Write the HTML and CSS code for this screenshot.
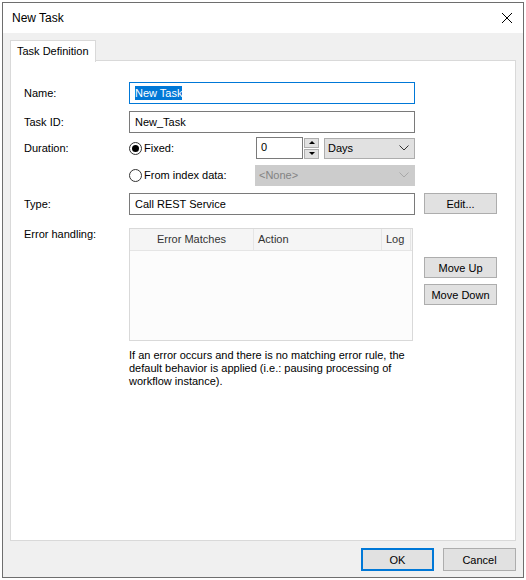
FILE: index.html
```html
<!DOCTYPE html>
<html lang="en">
<head>
  <meta charset="UTF-8" />
  <title>New Task</title>
  <link rel="stylesheet" href="styles.css">
</head>
<body>

<div class="dialog">
  <div class="titlebar">
    <span class="title">New Task</span>
    <svg class="close" width="12" height="12" viewBox="0 0 12 12">
      <path d="M1 1 L11 11 M11 1 L1 11" stroke="#000" stroke-width="1"/>
    </svg>
  </div>

  <div class="content">
    <div class="tabs">
      <div class="tab">Task Definition</div>
    </div>

    <div class="panel">
      <!-- Name -->
      <div class="row row-name">
        <div class="label">Name:</div>
        <div class="field input focused"><span class="sel">New Task</span></div>
      </div>

      <div class="row row-gap7">
        <div class="label">Task ID:</div>
        <div class="field input">New_Task</div>
      </div>

      <!-- Duration -->
      <div class="row row-gap4">
        <div class="label">Duration:</div>
        <div class="field dur">
          <div class="radio-wrap">
            <span class="radio checked"></span>
            <span>Fixed:</span>
          </div>
          <div class="spin-input">0</div>
          <div class="spin-btns">
            <div class="spin-btn"><span class="tri-up"></span></div>
            <div class="spin-btn"><span class="tri-down"></span></div>
          </div>
          <div class="combo">
            <span>Days</span>
            <svg width="10" height="6" viewBox="0 0 10 6"><path d="M0.5 0.5 L5 5 L9.5 0.5" fill="none" stroke="#333"/></svg>
          </div>
        </div>
      </div>

      <div class="row row-gap5">
        <div class="label"></div>
        <div class="field dur">
          <div class="radio-wrap wide">
            <span class="radio"></span>
            <span>From index data:</span>
          </div>
          <div class="combo disabled">
            <span>&lt;None&gt;</span>
            <svg width="10" height="6" viewBox="0 0 10 6"><path d="M0.5 0.5 L5 5 L9.5 0.5" fill="none" stroke="#a8a8a8"/></svg>
          </div>
        </div>
      </div>

      <!-- Type -->
      <div class="row row-gap7">
        <div class="label">Type:</div>
        <div class="field input">Call REST Service</div>
        <button class="btn btn-edit">Edit...</button>
      </div>

      <!-- Error handling -->
      <div class="row row-errors">
        <div class="label">Error handling:</div>
        <div class="err-col">
          <div class="table">
            <div class="thead">
              <div class="th th-match">Error Matches</div>
              <div class="th th-action">Action</div>
              <div class="th th-log">Log</div>
            </div>
          </div>
          <p class="note">If an error occurs and there is no matching error rule, the default behavior is applied (i.e.: pausing processing of workflow instance).</p>
        </div>
        <div class="side-btns">
          <button class="btn">Move Up</button>
          <button class="btn">Move Down</button>
        </div>
      </div>
    </div>

    <div class="footer">
      <button class="btn btn-foot btn-default">OK</button>
      <button class="btn btn-foot">Cancel</button>
    </div>
  </div>
</div>

</body>
</html>
```

FILE: styles.css
```css
body {
  margin: 0;
  background: #fff;
  font-family: 'Liberation Sans', Arial, sans-serif;
  font-size: 11px;
  color: #000;
}
.dialog {
  margin: 2px 2px 0 2px;
  width: 520px;
  height: 574px;
  border: 1px solid #6e6e6e;
  display: flex;
  flex-direction: column;
  background: #f0f0f0;
}
.titlebar {
  height: 30px;
  background: #fff;
  display: flex;
  align-items: center;
  justify-content: space-between;
  padding: 0 9px 0 9px;
}
.title {
  font-size: 12px;
}
.close {
  margin-right: 1px;
}
.content {
  flex: 1;
  display: flex;
  flex-direction: column;
  padding: 7px 7px 0 7px;
}
.tabs {
  display: flex;
  height: 20px;
}
.tab {
  background: #fff;
  border: 1px solid #d9d9d9;
  border-bottom: none;
  padding: 0 6px;
  white-space: nowrap;
  line-height: 21px;
  position: relative;
  z-index: 1;
  height: 21px;
}
.panel {
  height: 479px;
  background: #fff;
  border: 1px solid #d9d9d9;
  padding: 0 0 0 13px;
}
.row {
  display: flex;
  align-items: flex-start;
}
.row-name { margin-top: 21px; }
.row-gap7 { margin-top: 7px; }
.row-gap4 { margin-top: 4px; }
.row-gap5 { margin-top: 5px; }
.row-errors { margin-top: 13px; }
.label {
  width: 105px;
  flex-shrink: 0;
  line-height: 22px;
}
.row-errors .label {
  line-height: 13px;
}
.field {
  width: 286px;
  height: 22px;
  box-sizing: border-box;
}
.input {
  border: 1px solid #7a7a7a;
  padding: 0 5px;
  line-height: 20px;
}
.input.focused {
  border-color: #0078d7;
}
.sel {
  background: #0078d7;
  color: #fff;
  padding: 1px 0;
}
.dur {
  display: flex;
  align-items: center;
}
.radio-wrap {
  display: flex;
  align-items: center;
  gap: 2px;
  width: 127px;
}
.radio-wrap.wide {
  width: 126px;
}
.radio {
  width: 11px;
  height: 11px;
  border: 1px solid #333;
  border-radius: 50%;
  display: flex;
  align-items: center;
  justify-content: center;
  background: #fff;
}
.radio.checked::after {
  content: "";
  width: 7px;
  height: 7px;
  border-radius: 50%;
  background: #000;
}
.spin-input {
  width: 47px;
  height: 22px;
  box-sizing: border-box;
  border: 1px solid #7a7a7a;
  padding: 0 4px;
  line-height: 18px;
}
.spin-btns {
  display: flex;
  flex-direction: column;
  gap: 1px;
  margin-left: 1px;
  margin-right: 5px;
}
.spin-btn {
  width: 15px;
  height: 10px;
  box-sizing: border-box;
  border: 1px solid #adadad;
  background: #e1e1e1;
  display: flex;
  align-items: center;
  justify-content: center;
}
.tri-up, .tri-down {
  width: 0;
  height: 0;
  border-left: 3px solid transparent;
  border-right: 3px solid transparent;
}
.tri-up { border-bottom: 3px solid #000; }
.tri-down { border-top: 3px solid #000; }
.combo {
  flex: 1;
  height: 21px;
  box-sizing: border-box;
  border: 1px solid #adadad;
  background: #e1e1e1;
  display: flex;
  align-items: center;
  justify-content: space-between;
  padding: 0 5px 0 3px;
}
.combo.disabled {
  background: #cccccc;
  border-color: #cccccc;
  color: #838383;
}
.btn {
  font-family: inherit;
  font-size: 11px;
  width: 73px;
  height: 21px;
  box-sizing: border-box;
  background: #e1e1e1;
  border: 1px solid #adadad;
  padding: 0;
  color: #000;
}
.btn-edit {
  margin-left: 9px;
}
.err-col {
  width: 286px;
}
.table {
  width: 284px;
  height: 113px;
  box-sizing: border-box;
  border: 1px solid #d9d9d9;
  background: #fcfcfc;
}
.thead {
  display: flex;
  height: 21px;
  border-bottom: 1px solid #e5e5e5;
  background: #f5f5f5;
}
.th {
  line-height: 21px;
  border-right: 1px solid #e5e5e5;
  color: #333;
  box-sizing: border-box;
}
.th-match {
  width: 124px;
  text-align: center;
}
.th-action {
  width: 128px;
  padding-left: 4px;
}
.th-log {
  width: 29px;
  padding-left: 4px;
}
.note {
  margin: 8px 0 0 0;
  line-height: 13px;
  width: 285px;
}
.side-btns {
  display: flex;
  flex-direction: column;
  gap: 6px;
  margin-left: 9px;
  margin-top: 29px;
}
.footer {
  display: flex;
  justify-content: flex-end;
  gap: 9px;
  padding: 7px 0 0 0;
}
.btn-foot {
  height: 23px;
}
.btn-default {
  border: 2px solid #0078d7;
}
```
